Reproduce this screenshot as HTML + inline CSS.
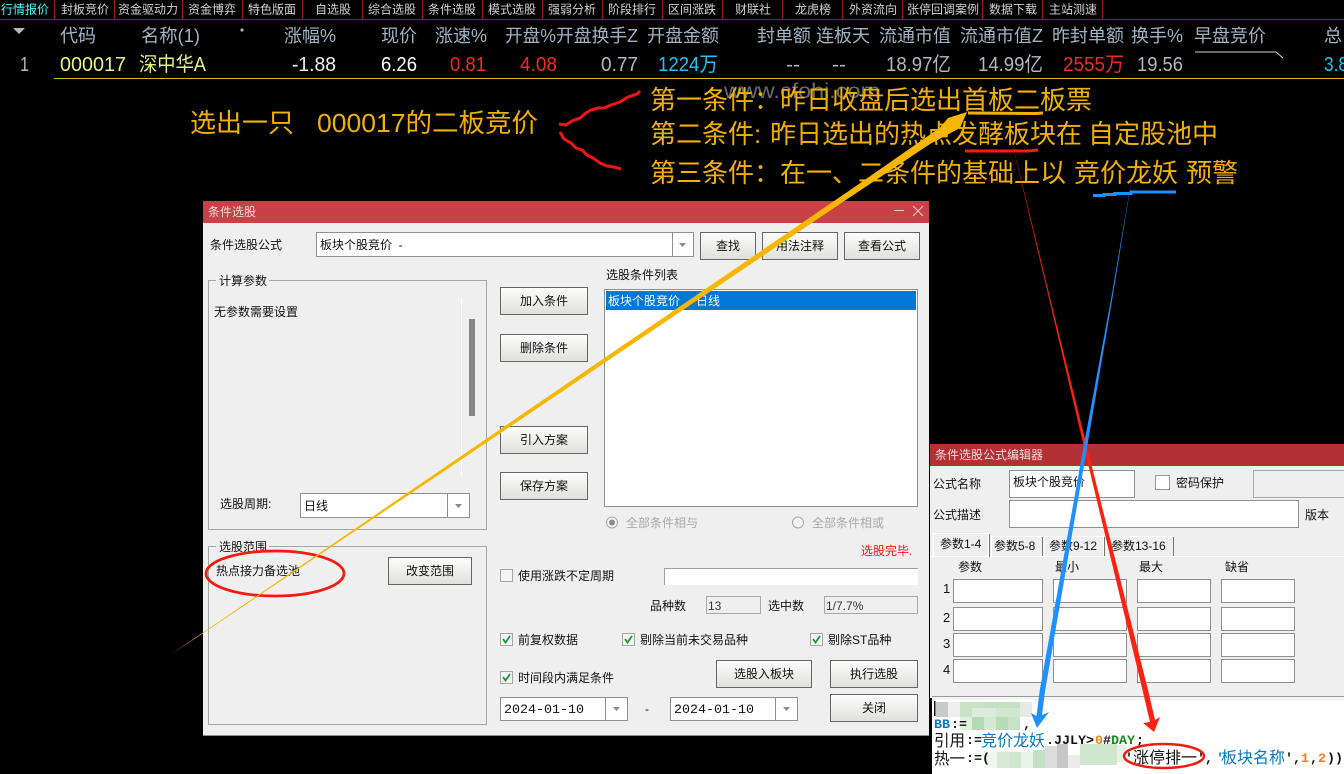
<!DOCTYPE html>
<html lang="zh"><head><meta charset="utf-8"><title>条件选股</title>
<style>
html,body{margin:0;padding:0;background:#000;width:1344px;height:774px;overflow:hidden}
svg{display:block;position:absolute;left:0;top:0}
text{font-family:"Liberation Sans","Noto Sans CJK SC",sans-serif;white-space:pre}
.n{font-size:12px;fill:#d2d2d2}
.h{font-size:18px;fill:#a2b2c2}
.r{font-size:20px;fill:#b0b8c0}
.a{font-size:26px;fill:#f2b000}
.d{font-size:12px;fill:#111}
.g{fill:#a9a9a9}
.t{font-family:"Liberation Mono","Noto Sans CJK SC",monospace;font-size:13.33px;fill:#111}
.c{font-family:"Liberation Mono","Noto Sans CJK SC",monospace;font-size:13.33px;fill:#111;font-weight:bold}
.cc{font-size:16px;fill:#111}
.bl{fill:#0a78c0}
.b{fill:url(#bg);stroke:#666}
.i{fill:#fff;stroke:#8f8f8f}
.x{fill:#efefef;stroke:#a8a8a8}
.ck{fill:#f4f4f4;stroke:#a5a5a5}
.m{fill:none;stroke:#1d9a2e;stroke-width:1.8}
.ar{fill:#8a8a8a}
.gb{fill:none;stroke:#a6a6a6}
</style></head><body>
<svg width="1344" height="774" viewBox="0 0 1344 774" xmlns="http://www.w3.org/2000/svg">
<defs><linearGradient id="bg" x1="0" y1="0" x2="0" y2="1"><stop offset="0" stop-color="#fdfdfd"/><stop offset="1" stop-color="#dfdfdd"/></linearGradient></defs>
<rect width="1344" height="774" fill="#000"/>

<!-- nav -->
<path d="M0 19.500H1344M54.500 0V19M114.500 0V19M182.500 0V19M242.500 0V19M302.500 0V19M362.500 0V19M422.500 0V19M482.500 0V19M542.500 0V19M602.500 0V19M662.500 0V19M722.500 0V19M782.500 0V19M842.500 0V19M902.500 0V19M982.500 0V19M1042.500 0V19M1102.500 0V19" stroke="#a81414" fill="none"/>
<text class="n" x="1" y="13.500" style="fill:#45ffff">行情报价</text>
<text class="n" x="61" y="13.500">封板竞价</text>
<text class="n" x="118" y="13.500">资金驱动力</text>
<text class="n" x="188" y="13.500">资金博弈</text>
<text class="n" x="248" y="13.500">特色版面</text>
<text class="n" x="315" y="13.500">自选股</text>
<text class="n" x="368" y="13.500">综合选股</text>
<text class="n" x="428" y="13.500">条件选股</text>
<text class="n" x="488" y="13.500">模式选股</text>
<text class="n" x="548" y="13.500">强弱分析</text>
<text class="n" x="608" y="13.500">阶段排行</text>
<text class="n" x="668" y="13.500">区间涨跌</text>
<text class="n" x="735" y="13.500">财联社</text>
<text class="n" x="795" y="13.500">龙虎榜</text>
<text class="n" x="849" y="13.500">外资流向</text>
<text class="n" x="907" y="13.500">张停回调案例</text>
<text class="n" x="989" y="13.500">数据下载</text>
<text class="n" x="1049" y="13.500">主站测速</text>

<!-- table header -->
<path d="M13 28H25L19 34Z" fill="#b8b8b8"/>
<circle cx="242" cy="30" r="1.600" fill="#b0b0b0"/>
<text class="h" x="60" y="42">代码</text>
<text class="h" x="141" y="42" textLength="59" lengthAdjust="spacingAndGlyphs">名称(1)</text>
<text class="h" x="284" y="42" textLength="52" lengthAdjust="spacingAndGlyphs">涨幅%</text>
<text class="h" x="381" y="42">现价</text>
<text class="h" x="435" y="42" textLength="52" lengthAdjust="spacingAndGlyphs">涨速%</text>
<text class="h" x="505" y="42" textLength="51" lengthAdjust="spacingAndGlyphs">开盘%</text>
<text class="h" x="556" y="42" textLength="82" lengthAdjust="spacingAndGlyphs">开盘换手Z</text>
<text class="h" x="647" y="42">开盘金额</text>
<text class="h" x="757" y="42">封单额</text>
<text class="h" x="816" y="42">连板天</text>
<text class="h" x="879" y="42">流通市值</text>
<text class="h" x="960" y="42" textLength="83" lengthAdjust="spacingAndGlyphs">流通市值Z</text>
<text class="h" x="1052" y="42">昨封单额</text>
<text class="h" x="1131" y="42" textLength="52" lengthAdjust="spacingAndGlyphs">换手%</text>
<text class="h" x="1194" y="42">早盘竞价</text>
<text class="h" x="1324" y="42">总</text>

<!-- table row -->
<text class="r" x="20" y="71" textLength="9" lengthAdjust="spacingAndGlyphs">1</text>
<text class="r" x="60" y="71" textLength="66" lengthAdjust="spacingAndGlyphs" style="fill:#e4f47c">000017</text>
<text class="r" x="139" y="71" textLength="67" lengthAdjust="spacingAndGlyphs" style="fill:#e4f47c">深中华A</text>
<text class="r" x="292" y="71" textLength="44" lengthAdjust="spacingAndGlyphs" style="fill:#f0f0f0">-1.88</text>
<text class="r" x="381" y="71" textLength="36" lengthAdjust="spacingAndGlyphs" style="fill:#fff">6.26</text>
<text class="r" x="450" y="71" textLength="36" lengthAdjust="spacingAndGlyphs" style="fill:#f02828">0.81</text>
<text class="r" x="520" y="71" textLength="37" lengthAdjust="spacingAndGlyphs" style="fill:#f02828">4.08</text>
<text class="r" x="601" y="71" textLength="37" lengthAdjust="spacingAndGlyphs">0.77</text>
<text class="r" x="658" y="71" textLength="60" lengthAdjust="spacingAndGlyphs" style="fill:#18c8f0">1224万</text>
<text class="r" x="786" y="71" textLength="14" lengthAdjust="spacingAndGlyphs">--</text>
<text class="r" x="832" y="71" textLength="14" lengthAdjust="spacingAndGlyphs">--</text>
<text class="r" x="886" y="71" textLength="65" lengthAdjust="spacingAndGlyphs">18.97亿</text>
<text class="r" x="978" y="71" textLength="65" lengthAdjust="spacingAndGlyphs">14.99亿</text>
<text class="r" x="1063" y="71" textLength="61" lengthAdjust="spacingAndGlyphs" style="fill:#f02828">2555万</text>
<text class="r" x="1137" y="71" textLength="46" lengthAdjust="spacingAndGlyphs">19.56</text>
<text class="r" x="1324" y="71" textLength="24" lengthAdjust="spacingAndGlyphs" style="fill:#18c8f0">3.8</text>
<path d="M1195 52H1276L1283 58" stroke="#cfcfcf" fill="none"/>
<rect x="54" y="78" width="1290" height="1" fill="#c8c000"/>

<!-- watermark -->
<text x="724" y="98" textLength="156" lengthAdjust="spacingAndGlyphs" style="font-size:21px;fill:#666a70">www.cfohi.com</text>

<!-- annotations -->
<text class="a" x="190" y="132">选出一只</text>
<text class="a" x="317" y="132" textLength="221" lengthAdjust="spacingAndGlyphs">000017的二板竞价</text>
<text class="a" x="650" y="109">第一条件：昨日收盘后选出首板二板票</text>
<text class="a" x="650" y="143">第二条件:</text>
<text class="a" x="770" y="143">昨日选出的热点发酵板块在</text>
<text class="a" x="1088" y="143">自定股池中</text>
<text class="a" x="650" y="182">第三条件：在一、二条件的基础上以</text>
<text class="a" x="1074" y="182">竞价龙妖</text>
<text class="a" x="1186" y="182">预警</text>
<path d="M640 91L637 94L628 97L620 102L611 105L604 108L598 108L591 110L586 113L580 118L572 121L566 125L559 124" stroke="#f01414" stroke-width="3" fill="none"/>
<path d="M560 132L564 139L571 143L576 148L582 150L587 155L593 158L600 163L607 166L614 167L621 169" stroke="#f01414" stroke-width="3" fill="none"/>
<path d="M968 113L1036 113.500L1043 113" stroke="#f2b000" stroke-width="3" fill="none"/>
<path d="M965 151L1028 151L1038 150" stroke="#f01e10" stroke-width="3" fill="none"/>
<path d="M1093 195.500H1104V194.500H1115V193.500H1131V192L1176 192" stroke="#1e90ff" stroke-width="3" fill="none"/>

<!-- main dialog -->
<rect x="203" y="201" width="726" height="535" fill="#efefef"/>
<rect x="203" y="735" width="726" height="1" fill="#8c8c8c"/>
<rect x="203" y="201" width="726" height="22" fill="#c84146"/>
<text class="d" x="208" y="216" style="fill:#f5d8d8">条件选股</text>
<path d="M894 210.500H904M913 206L923 216M923 206L913 216" stroke="#eecccc" fill="none"/>

<text class="d" x="210" y="249">条件选股公式</text>
<rect class="i" x="316.500" y="232.500" width="377" height="24"/>
<path d="M672.500 233V256" stroke="#8f8f8f"/>
<path class="ar" d="M679 243H686L682.500 247Z"/>
<text class="d" x="320" y="249">板块个股竞价  -</text>
<rect class="b" x="700.500" y="232.500" width="55" height="27"/><text class="d" x="716" y="250">查找</text>
<rect class="b" x="762.500" y="232.500" width="75" height="27"/><text class="d" x="776" y="250">用法注释</text>
<rect class="b" x="844.500" y="232.500" width="75" height="27"/><text class="d" x="858" y="250">查看公式</text>

<text class="d" x="606" y="279">选股条件列表</text>
<rect class="i" x="604.500" y="289.500" width="313" height="217"/>
<rect x="606" y="291" width="310" height="19" fill="#0078d7"/>
<text class="d" x="608" y="305" style="fill:#fff">板块个股竞价</text>
<text class="d" x="696" y="305" style="fill:#fff">日线</text>

<!-- left group -->
<rect class="gb" x="208.500" y="280.500" width="278" height="249"/>
<rect x="216" y="276" width="53" height="10" fill="#efefef"/>
<text class="d" x="219" y="285">计算参数</text>
<text class="d" x="214" y="316">无参数需要设置</text>
<path d="M461.500 298V475" stroke="#fff"/>
<rect x="469" y="319" width="6" height="97" fill="#888"/>
<text class="d" x="220" y="508">选股周期:</text>
<rect class="i" x="300.500" y="493.500" width="169" height="24"/>
<path d="M447.500 494V517" stroke="#8f8f8f"/>
<path class="ar" d="M455 504H462L458.500 508Z"/>
<text class="d" x="304" y="510">日线</text>

<rect class="gb" x="208.500" y="546.500" width="278" height="178"/>
<rect x="216" y="542" width="53" height="10" fill="#efefef"/>
<text class="d" x="219" y="551">选股范围</text>
<text class="d" x="216" y="575">热点接力备选池</text>
<rect class="b" x="388.500" y="557.500" width="83" height="27"/><text class="d" x="406" y="575">改变范围</text>
<ellipse cx="275" cy="573.500" rx="69" ry="22.500" fill="none" stroke="#f01c10" stroke-width="2.800"/>

<!-- middle buttons -->
<rect class="b" x="500.500" y="287.500" width="87" height="27"/><text class="d" x="520" y="305">加入条件</text>
<rect class="b" x="500.500" y="334.500" width="87" height="27"/><text class="d" x="520" y="352">删除条件</text>
<rect class="b" x="500.500" y="426.500" width="87" height="27"/><text class="d" x="520" y="444">引入方案</text>
<rect class="b" x="500.500" y="472.500" width="87" height="27"/><text class="d" x="520" y="490">保存方案</text>

<!-- radios -->
<circle cx="612" cy="522.500" r="5.500" fill="#f4f4f4" stroke="#a5a5a5"/><circle cx="612" cy="522.500" r="3" fill="#8a8a8a"/>
<text class="d g" x="626" y="527">全部条件相与</text>
<circle cx="798" cy="522.500" r="5.500" fill="#f4f4f4" stroke="#a5a5a5"/>
<text class="d g" x="812" y="527">全部条件相或</text>
<text class="d" x="861" y="555" style="fill:#f01818">选股完毕.</text>

<rect class="ck" x="500.500" y="569.500" width="12" height="12"/>
<text class="d" x="518" y="580">使用涨跌不定周期</text>
<rect x="664" y="568" width="254" height="17" fill="#fff"/><path d="M664.500 585V568.500H918" fill="none" stroke="#a0a0a0"/>
<text class="d" x="650" y="610">品种数</text>
<rect class="x" x="706.500" y="596.500" width="54" height="17"/><text class="d" x="708" y="610" style="fill:#333">13</text>
<text class="d" x="768" y="610">选中数</text>
<rect class="x" x="824.500" y="596.500" width="93" height="17"/><text class="d" x="826" y="610" style="fill:#333">1/7.7%</text>

<rect class="ck" x="500.500" y="633.500" width="12" height="12"/><path class="m" d="M503 639L505.500 642.500L510 636"/>
<text class="d" x="518" y="644">前复权数据</text>
<rect class="ck" x="622.500" y="633.500" width="12" height="12"/><path class="m" d="M625 639L627.500 642.500L632 636"/>
<text class="d" x="640" y="644">剔除当前未交易品种</text>
<rect class="ck" x="810.500" y="633.500" width="12" height="12"/><path class="m" d="M813 639L815.500 642.500L820 636"/>
<text class="d" x="828" y="644">剔除ST品种</text>
<rect class="ck" x="500.500" y="671.500" width="12" height="12"/><path class="m" d="M503 677L505.500 680.500L510 674"/>
<text class="d" x="518" y="682">时间段内满足条件</text>

<rect class="b" x="716.500" y="660.500" width="95" height="27"/><text class="d" x="734" y="678">选股入板块</text>
<rect class="b" x="830.500" y="660.500" width="87" height="27"/><text class="d" x="850" y="678">执行选股</text>
<rect class="b" x="830.500" y="694.500" width="87" height="27"/><text class="d" x="862" y="712">关闭</text>

<rect class="i" x="500.500" y="697.500" width="127" height="23"/><path d="M605.500 698V720" stroke="#8f8f8f"/><path class="ar" d="M613 707H620L616.500 711Z"/>
<text class="t" x="504" y="713">2024-01-10</text>
<text class="d" x="645" y="713">-</text>
<rect class="i" x="670.500" y="697.500" width="127" height="23"/><path d="M775.500 698V720" stroke="#8f8f8f"/><path class="ar" d="M783 707H790L786.500 711Z"/>
<text class="t" x="674" y="713">2024-01-10</text>

<!-- editor dialog -->
<rect x="930" y="444" width="414" height="254" fill="#efefef"/>
<rect x="930" y="444" width="414" height="22" fill="#b33035"/>
<text class="d" x="935" y="459" style="fill:#f5d8d8">条件选股公式编辑器</text>
<text class="d" x="933" y="488">公式名称</text>
<rect class="i" x="1009.500" y="470.500" width="125" height="27"/>
<text class="d" x="1013" y="486">板块个股竞价</text>
<rect x="1155.500" y="475.500" width="14" height="14" fill="#fff" stroke="#9a9a9a"/>
<text class="d" x="1176" y="487">密码保护</text>
<rect x="1253.500" y="470.500" width="95" height="27" fill="#efefef" stroke="#a8a8a8"/>
<text class="d" x="933" y="519">公式描述</text>
<rect class="i" x="1009.500" y="500.500" width="289" height="27"/>
<text class="d" x="1305" y="519">版本</text>

<path d="M930 556.500H1344" stroke="#fff"/>
<path d="M933.500 556V533.500H988.500V556" fill="#efefef" stroke="#ffffff"/>
<path d="M989.500 534V557" stroke="#777"/>
<path d="M991.500 556V536.500H1042.500V556" fill="#efefef" stroke="#fff"/><path d="M1042.500 537V556" stroke="#777"/>
<path d="M1044.500 556V536.500H1103.500V556" fill="#efefef" stroke="#fff"/><path d="M1104.500 537V556" stroke="#777"/>
<path d="M1106.500 556V536.500H1173.500V556" fill="#efefef" stroke="#fff"/><path d="M1173.500 537V556" stroke="#777"/>
<text class="d" x="940" y="548">参数1-4</text>
<text class="d" x="994" y="550">参数5-8</text>
<text class="d" x="1049" y="550">参数9-12</text>
<text class="d" x="1111" y="550">参数13-16</text>
<text class="d" x="958" y="571">参数</text>
<text class="d" x="1055" y="571">最小</text>
<text class="d" x="1139" y="571">最大</text>
<text class="d" x="1225" y="571">缺省</text>
<text class="d" x="943" y="593" style="font-size:13px">1</text><text class="d" x="943" y="622" style="font-size:13px">2</text><text class="d" x="943" y="648" style="font-size:13px">3</text><text class="d" x="943" y="674" style="font-size:13px">4</text>
<g>
<rect class="i" x="953.500" y="579.500" width="89" height="23"/><rect class="i" x="1053.500" y="579.500" width="73" height="23"/><rect class="i" x="1137.500" y="579.500" width="73" height="23"/><rect class="i" x="1221.500" y="579.500" width="73" height="23"/>
<rect class="i" x="953.500" y="607.500" width="89" height="23"/><rect class="i" x="1053.500" y="607.500" width="73" height="23"/><rect class="i" x="1137.500" y="607.500" width="73" height="23"/><rect class="i" x="1221.500" y="607.500" width="73" height="23"/>
<rect class="i" x="953.500" y="633.500" width="89" height="23"/><rect class="i" x="1053.500" y="633.500" width="73" height="23"/><rect class="i" x="1137.500" y="633.500" width="73" height="23"/><rect class="i" x="1221.500" y="633.500" width="73" height="23"/>
<rect class="i" x="953.500" y="659.500" width="89" height="23"/><rect class="i" x="1053.500" y="659.500" width="73" height="23"/><rect class="i" x="1137.500" y="659.500" width="73" height="23"/><rect class="i" x="1221.500" y="659.500" width="73" height="23"/>
</g>

<!-- code editor -->
<rect x="932" y="697" width="412" height="77" fill="#fff"/>
<rect x="932" y="697" width="412" height="3" fill="#f4f4f4"/>
<path d="M932 696.500H1344" stroke="#9a9a9a"/>
<rect x="934" y="701" width="1.500" height="15" fill="#111"/>
<!-- mosaic 1 -->
<rect x="936" y="702" width="12" height="15" fill="#c6cacA"/><rect x="948" y="702" width="12" height="15" fill="#eeeeee"/>
<rect x="960" y="702" width="24" height="6" fill="#c8e2c8"/><rect x="984" y="702" width="36" height="6" fill="#c4dfc4"/>
<rect x="960" y="708" width="12" height="9" fill="#c8e2c8"/><rect x="972" y="708" width="24" height="9" fill="#dcecdc"/><rect x="996" y="708" width="24" height="9" fill="#cfe6cf"/>
<rect x="1020" y="702" width="12" height="15" fill="#e8e8e8"/>
<rect x="960" y="717" width="12" height="13" fill="#e0efe0"/><rect x="972" y="717" width="12" height="13" fill="#b4dab4"/><rect x="984" y="717" width="12" height="13" fill="#d4e8d4"/><rect x="996" y="717" width="12" height="13" fill="#b8dcb8"/><rect x="1008" y="717" width="12" height="13" fill="#c8e2c8"/>
<text class="c" x="934" y="728" style="fill:#0a78c0">BB</text><text class="c" x="951" y="728">:=</text>
<text class="c" x="1023" y="728">,</text>
<text class="cc" x="934" y="746" textLength="31" lengthAdjust="spacingAndGlyphs">引用</text><text class="c" x="966" y="744">:=</text>
<text class="cc bl" x="981" y="746">竞价龙妖</text>
<text class="c" x="1046" y="744">.JJLY&gt;</text>
<text class="c" x="1095" y="744" style="fill:#f08010">0</text>
<text class="c" x="1103" y="744">#</text>
<text class="c" x="1111" y="744" style="fill:#108a20">DAY</text>
<text class="c" x="1136" y="744">;</text>
<!-- mosaic 2 -->
<rect x="985" y="752" width="12" height="16" fill="#f0f6f0"/><rect x="997" y="752" width="12" height="16" fill="#d6ead6"/><rect x="1009" y="752" width="12" height="16" fill="#cfe6cf"/><rect x="1021" y="752" width="12" height="16" fill="#e8f3e8"/><rect x="1033" y="750" width="12" height="18" fill="#c6e0c6"/>
<rect x="1045" y="746" width="12" height="22" fill="#dcdcdc"/><rect x="1057" y="744" width="11" height="24" fill="#c6c6c6"/><rect x="1068" y="755" width="12" height="13" fill="#ececec"/>
<rect x="1080" y="744" width="37" height="21" fill="#cfe6cf"/><rect x="1117" y="745" width="9" height="17" fill="#e6f2e6"/>
<text class="cc" x="934" y="764" textLength="31" lengthAdjust="spacingAndGlyphs">热一</text><text class="c" x="966" y="762">:=(</text>
<text class="c" x="1125" y="762">'</text>
<text class="cc" x="1133" y="763">涨停排一</text>
<text class="c" x="1197" y="762">',</text>
<text class="c" x="1216" y="762" style="fill:#0a78c0">'</text>
<text class="cc bl" x="1221" y="763">板块名称</text>
<text class="c" x="1285" y="762">',</text>
<text class="c" x="1301" y="762" style="fill:#f08010">1</text>
<text class="c" x="1310" y="762">,</text>
<text class="c" x="1318" y="762" style="fill:#f08010">2</text>
<text class="c" x="1327" y="762">))</text>
<ellipse cx="1164" cy="756" rx="40" ry="12" fill="none" stroke="#f01c10" stroke-width="2.500"/>

<!-- arrows -->
<polygon points="967,112 948,118 940,127.600 848,191.500 600,361 450,463.600 315,556.100 200,634.600 170,655 200,635.400 315,557.900 450,467.200 600,366 848,198.500 930,144 960,128" fill="#f7b600"/>
<polygon points="1006,117 1050.600,300 1086,443 1148,690 1155,720 1160,717 1154,732 1143,723 1150,722 1142.500,690 1083,443 1049.400,300" fill="#ff2010"/>
<polygon points="1134,165 1112.100,300 1087.800,443 1045.200,690 1042,715 1049,712 1037,728 1031,713 1036.500,716 1039.800,690 1084.200,443 1110.900,300" fill="#1e90ff"/>
</svg>
</body></html>
